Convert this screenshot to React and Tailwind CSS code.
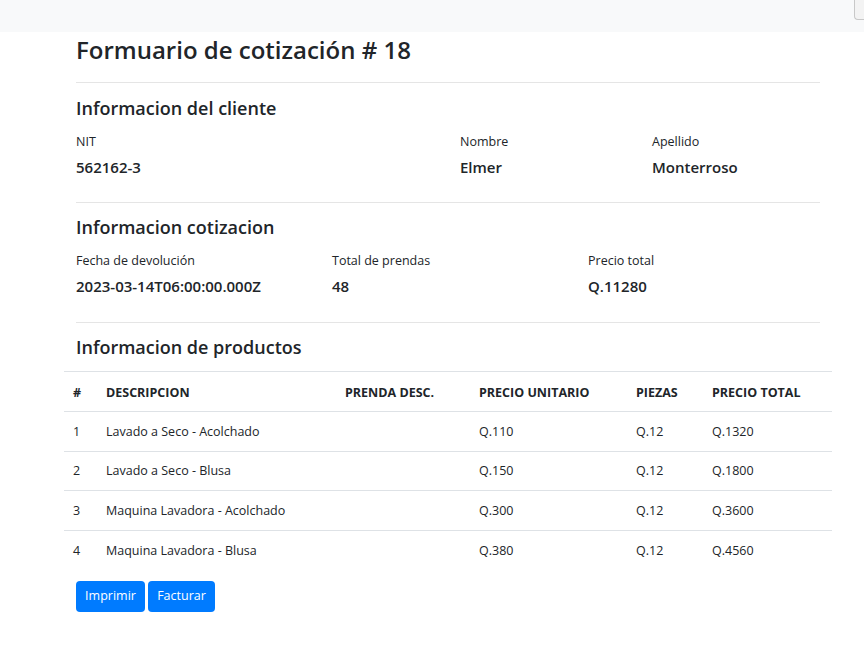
import React from "react";

const productos = [
  { id: 1, desc: "Lavado a Seco - Acolchado", unit: "Q.110", piezas: "Q.12", total: "Q.1320" },
  { id: 2, desc: "Lavado a Seco - Blusa", unit: "Q.150", piezas: "Q.12", total: "Q.1800" },
  { id: 3, desc: "Maquina Lavadora - Acolchado", unit: "Q.300", piezas: "Q.12", total: "Q.3600" },
  { id: 4, desc: "Maquina Lavadora - Blusa", unit: "Q.380", piezas: "Q.12", total: "Q.4560" },
];

function Field({ label, value }) {
  return (
    <div className="px-3">
      <div className="text-[12.5px] leading-[18px] text-[#212529]">{label}</div>
      <div className="mt-[6px] text-[15px] leading-[20px] font-semibold text-[#212529]">{value}</div>
    </div>
  );
}

export default function App() {
  return (
    <div
      className="relative min-h-screen bg-white text-[#212529]"
      style={{ fontFamily: '"Open Sans", "Liberation Sans", sans-serif' }}
    >
      {/* barra superior */}
      <div className="h-[32px] bg-[#f8f9fa]" />
      <div className="absolute right-0 top-0 h-[20px] w-[10px] rounded-bl-[4px] border-b border-l border-[#c8c8c8] bg-[#f3f3f3]" />

      <div className="w-[768px] pb-10 ml-[64px]">
        <div className="px-3">
          <h1 className="pt-[2px] text-[24px] leading-[32px] font-[550]">Formuario de cotización # 18</h1>
          <hr className="mt-[16px] border-[#e5e5e5]" />
          <h2 className="mt-[13px] text-[18px] leading-[24px] font-semibold">Informacion del cliente</h2>
        </div>

        <div className="mt-[13px] grid grid-cols-4">
          <div className="col-span-2">
            <Field label="NIT" value="562162-3" />
          </div>
          <Field label="Nombre" value="Elmer" />
          <Field label="Apellido" value="Monterroso" />
        </div>

        <div className="px-3">
          <hr className="mt-[25px] border-[#e5e5e5]" />
          <h2 className="mt-[12px] text-[18px] leading-[24px] font-semibold">Informacion cotizacion</h2>
        </div>

        <div className="mt-[13px] grid grid-cols-3">
          <Field label="Fecha de devolución" value="2023-03-14T06:00:00.000Z" />
          <Field label="Total de prendas" value="48" />
          <Field label="Precio total" value="Q.11280" />
        </div>

        <div className="px-3">
          <hr className="mt-[26px] border-[#e5e5e5]" />
          <h2 className="mt-[12px] text-[18px] leading-[24px] font-semibold">Informacion de productos</h2>
        </div>

        <table className="mt-[12px] w-full border-collapse text-left text-[12.5px]">
          <thead>
            <tr className="border-t border-b border-[#dee2e6] h-[40px]">
              <th className="w-[34px] pl-[9px] pt-[3px] font-bold">#</th>
              <th className="w-[239px] pl-[8px] pt-[3px] font-bold">DESCRIPCION</th>
              <th className="w-[134px] pl-[8px] pt-[3px] font-bold">PRENDA DESC.</th>
              <th className="w-[157px] pl-[8px] pt-[3px] font-bold">PRECIO UNITARIO</th>
              <th className="w-[76px] pl-[8px] pt-[3px] font-bold">PIEZAS</th>
              <th className="pl-[8px] pt-[3px] font-bold">PRECIO TOTAL</th>
            </tr>
          </thead>
          <tbody>
            {productos.map((p) => (
              <tr key={p.id} className="border-b border-[#dee2e6] h-[39.5px] last:border-b-0">
                <td className="pl-[9px] pt-[2px]">{p.id}</td>
                <td className="pl-[8px] pt-[2px]">{p.desc}</td>
                <td className="pl-[8px] pt-[2px]"></td>
                <td className="pl-[8px] pt-[2px]">{p.unit}</td>
                <td className="pl-[8px] pt-[2px]">{p.piezas}</td>
                <td className="pl-[8px] pt-[2px]">{p.total}</td>
              </tr>
            ))}
          </tbody>
        </table>

        <div className="mt-[11px] flex gap-[3px] px-3">
          <button className="h-[31px] w-[69px] rounded-[4px] bg-[#007bff] text-[12.5px] text-white">Imprimir</button>
          <button className="h-[31px] w-[67px] rounded-[4px] bg-[#007bff] text-[12.5px] text-white">Facturar</button>
        </div>
      </div>
    </div>
  );
}
